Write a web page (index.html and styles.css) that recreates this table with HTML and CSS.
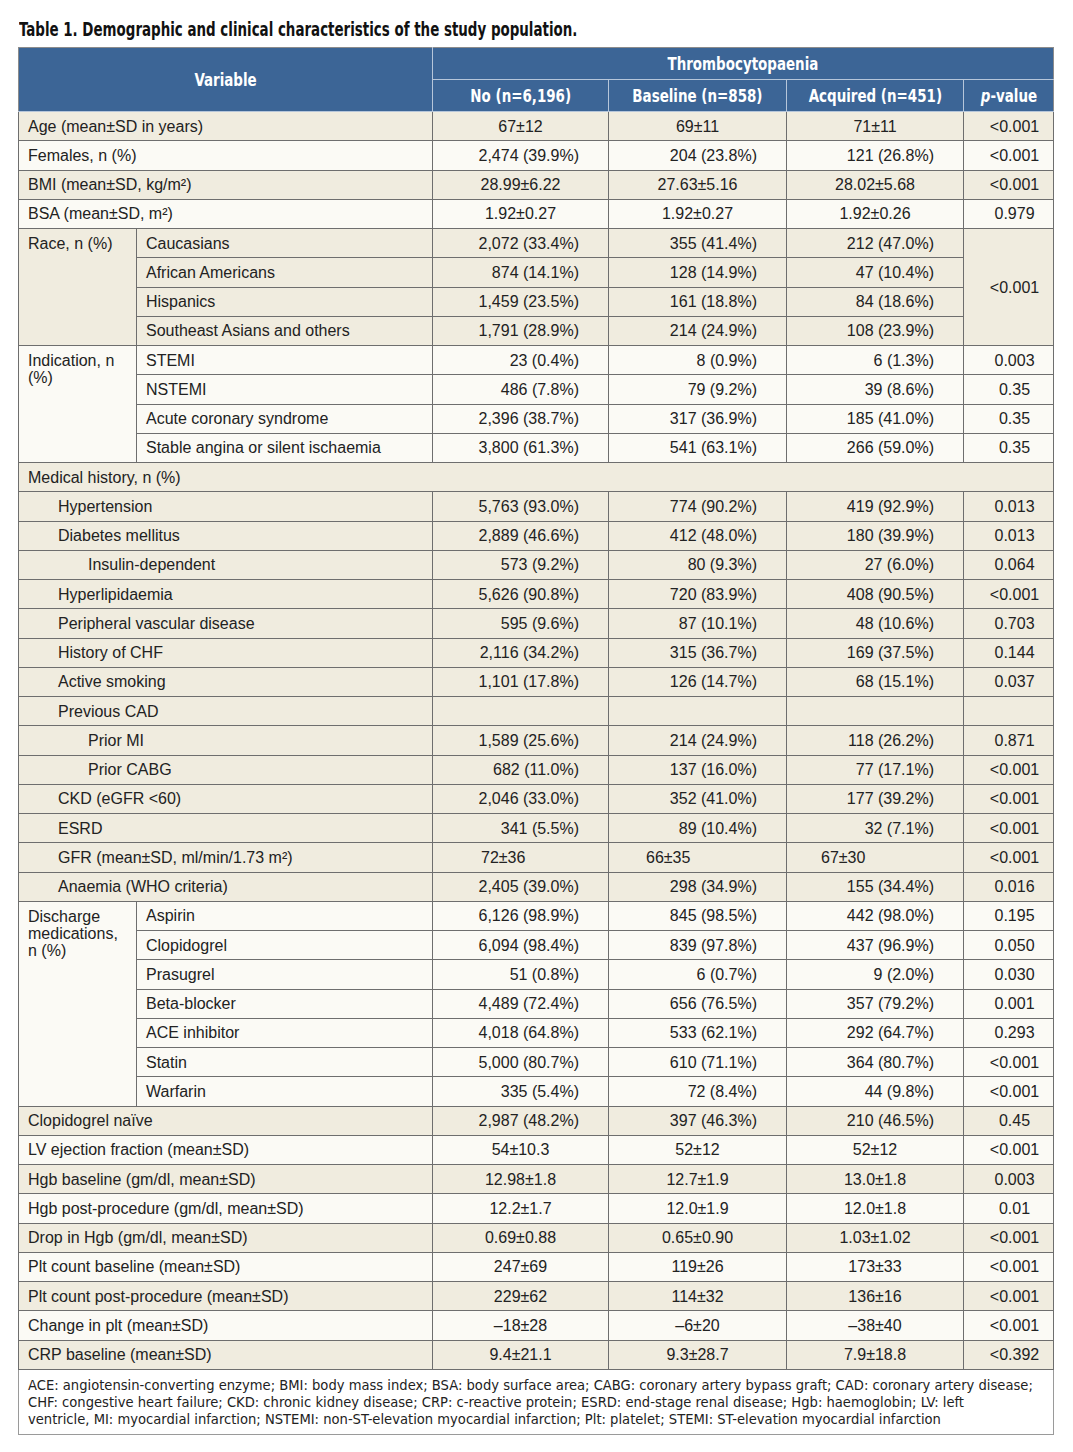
FILE: index.html
```html
<!DOCTYPE html>
<html lang="en">
<head>
<meta charset="utf-8">
<title>Table 1</title>
<link rel="stylesheet" href="styles.css">
</head>
<body>
<div class="page">
<h1 class="title"><span class="sq-title">Table 1. Demographic and clinical characteristics of the study population.</span></h1>
<table class="tbl">
<colgroup>
<col class="c-grp"><col class="c-sub"><col class="c-no"><col class="c-base"><col class="c-acq"><col class="c-p">
</colgroup>
<thead>
<tr class="h1">
<th colspan="2" rowspan="2"><span class="sq">Variable</span></th>
<th colspan="4"><span class="sq">Thrombocytopaenia</span></th>
</tr>
<tr class="h2">
<th><span class="sq">No (n=6,196)</span></th>
<th><span class="sq">Baseline (n=858)</span></th>
<th><span class="sq">Acquired (n=451)</span></th>
<th><span class="sq"><i>p</i>-value</span></th>
</tr>
</thead>
<tbody>
<tr class="bg"><td colspan="2" class="v">Age (mean±SD in years)</td><td class="c">67±12</td><td class="c">69±11</td><td class="c">71±11</td><td class="p">&lt;0.001</td></tr>
<tr class="wh"><td colspan="2" class="v">Females, n (%)</td><td class="n">2,474 (39.9%)</td><td class="n">204 (23.8%)</td><td class="n">121 (26.8%)</td><td class="p">&lt;0.001</td></tr>
<tr class="bg"><td colspan="2" class="v">BMI (mean±SD, kg/m²)</td><td class="c">28.99±6.22</td><td class="c">27.63±5.16</td><td class="c">28.02±5.68</td><td class="p">&lt;0.001</td></tr>
<tr class="wh"><td colspan="2" class="v">BSA (mean±SD, m²)</td><td class="c">1.92±0.27</td><td class="c">1.92±0.27</td><td class="c">1.92±0.26</td><td class="p">0.979</td></tr>

<tr class="bg"><td rowspan="4" class="v grp">Race, n (%)</td><td class="v">Caucasians</td><td class="n">2,072 (33.4%)</td><td class="n">355 (41.4%)</td><td class="n">212 (47.0%)</td><td rowspan="4" class="p">&lt;0.001</td></tr>
<tr class="bg"><td class="v">African Americans</td><td class="n">874 (14.1%)</td><td class="n">128 (14.9%)</td><td class="n">47 (10.4%)</td></tr>
<tr class="bg"><td class="v">Hispanics</td><td class="n">1,459 (23.5%)</td><td class="n">161 (18.8%)</td><td class="n">84 (18.6%)</td></tr>
<tr class="bg"><td class="v">Southeast Asians and others</td><td class="n">1,791 (28.9%)</td><td class="n">214 (24.9%)</td><td class="n">108 (23.9%)</td></tr>

<tr class="wh"><td rowspan="4" class="v grp">Indication, n (%)</td><td class="v">STEMI</td><td class="n">23 (0.4%)</td><td class="n">8 (0.9%)</td><td class="n">6 (1.3%)</td><td class="p">0.003</td></tr>
<tr class="wh"><td class="v">NSTEMI</td><td class="n">486 (7.8%)</td><td class="n">79 (9.2%)</td><td class="n">39 (8.6%)</td><td class="p">0.35</td></tr>
<tr class="wh"><td class="v">Acute coronary syndrome</td><td class="n">2,396 (38.7%)</td><td class="n">317 (36.9%)</td><td class="n">185 (41.0%)</td><td class="p">0.35</td></tr>
<tr class="wh"><td class="v">Stable angina or silent ischaemia</td><td class="n">3,800 (61.3%)</td><td class="n">541 (63.1%)</td><td class="n">266 (59.0%)</td><td class="p">0.35</td></tr>

<tr class="bg"><td colspan="6" class="v">Medical history, n (%)</td></tr>
<tr class="bg"><td colspan="2" class="v i1">Hypertension</td><td class="n">5,763 (93.0%)</td><td class="n">774 (90.2%)</td><td class="n">419 (92.9%)</td><td class="p">0.013</td></tr>
<tr class="bg"><td colspan="2" class="v i1">Diabetes mellitus</td><td class="n">2,889 (46.6%)</td><td class="n">412 (48.0%)</td><td class="n">180 (39.9%)</td><td class="p">0.013</td></tr>
<tr class="bg"><td colspan="2" class="v i2">Insulin-dependent</td><td class="n">573 (9.2%)</td><td class="n">80 (9.3%)</td><td class="n">27 (6.0%)</td><td class="p">0.064</td></tr>
<tr class="bg"><td colspan="2" class="v i1">Hyperlipidaemia</td><td class="n">5,626 (90.8%)</td><td class="n">720 (83.9%)</td><td class="n">408 (90.5%)</td><td class="p">&lt;0.001</td></tr>
<tr class="bg"><td colspan="2" class="v i1">Peripheral vascular disease</td><td class="n">595 (9.6%)</td><td class="n">87 (10.1%)</td><td class="n">48 (10.6%)</td><td class="p">0.703</td></tr>
<tr class="bg"><td colspan="2" class="v i1">History of CHF</td><td class="n">2,116 (34.2%)</td><td class="n">315 (36.7%)</td><td class="n">169 (37.5%)</td><td class="p">0.144</td></tr>
<tr class="bg"><td colspan="2" class="v i1">Active smoking</td><td class="n">1,101 (17.8%)</td><td class="n">126 (14.7%)</td><td class="n">68 (15.1%)</td><td class="p">0.037</td></tr>
<tr class="bg"><td colspan="2" class="v i1">Previous CAD</td><td></td><td></td><td></td><td></td></tr>
<tr class="bg"><td colspan="2" class="v i2">Prior MI</td><td class="n">1,589 (25.6%)</td><td class="n">214 (24.9%)</td><td class="n">118 (26.2%)</td><td class="p">0.871</td></tr>
<tr class="bg"><td colspan="2" class="v i2">Prior CABG</td><td class="n">682 (11.0%)</td><td class="n">137 (16.0%)</td><td class="n">77 (17.1%)</td><td class="p">&lt;0.001</td></tr>
<tr class="bg"><td colspan="2" class="v i1">CKD (eGFR &lt;60)</td><td class="n">2,046 (33.0%)</td><td class="n">352 (41.0%)</td><td class="n">177 (39.2%)</td><td class="p">&lt;0.001</td></tr>
<tr class="bg"><td colspan="2" class="v i1">ESRD</td><td class="n">341 (5.5%)</td><td class="n">89 (10.4%)</td><td class="n">32 (7.1%)</td><td class="p">&lt;0.001</td></tr>
<tr class="bg"><td colspan="2" class="v i1">GFR (mean±SD, ml/min/1.73 m²)</td><td class="l l-no">72±36</td><td class="l l-base">66±35</td><td class="l l-acq">67±30</td><td class="p">&lt;0.001</td></tr>
<tr class="bg"><td colspan="2" class="v i1">Anaemia (WHO criteria)</td><td class="n">2,405 (39.0%)</td><td class="n">298 (34.9%)</td><td class="n">155 (34.4%)</td><td class="p">0.016</td></tr>

<tr class="wh"><td rowspan="7" class="v grp">Discharge medications, n (%)</td><td class="v">Aspirin</td><td class="n">6,126 (98.9%)</td><td class="n">845 (98.5%)</td><td class="n">442 (98.0%)</td><td class="p">0.195</td></tr>
<tr class="wh"><td class="v">Clopidogrel</td><td class="n">6,094 (98.4%)</td><td class="n">839 (97.8%)</td><td class="n">437 (96.9%)</td><td class="p">0.050</td></tr>
<tr class="wh"><td class="v">Prasugrel</td><td class="n">51 (0.8%)</td><td class="n">6 (0.7%)</td><td class="n">9 (2.0%)</td><td class="p">0.030</td></tr>
<tr class="wh"><td class="v">Beta-blocker</td><td class="n">4,489 (72.4%)</td><td class="n">656 (76.5%)</td><td class="n">357 (79.2%)</td><td class="p">0.001</td></tr>
<tr class="wh"><td class="v">ACE inhibitor</td><td class="n">4,018 (64.8%)</td><td class="n">533 (62.1%)</td><td class="n">292 (64.7%)</td><td class="p">0.293</td></tr>
<tr class="wh"><td class="v">Statin</td><td class="n">5,000 (80.7%)</td><td class="n">610 (71.1%)</td><td class="n">364 (80.7%)</td><td class="p">&lt;0.001</td></tr>
<tr class="wh"><td class="v">Warfarin</td><td class="n">335 (5.4%)</td><td class="n">72 (8.4%)</td><td class="n">44 (9.8%)</td><td class="p">&lt;0.001</td></tr>

<tr class="bg"><td colspan="2" class="v">Clopidogrel naïve</td><td class="n">2,987 (48.2%)</td><td class="n">397 (46.3%)</td><td class="n">210 (46.5%)</td><td class="p">0.45</td></tr>
<tr class="wh"><td colspan="2" class="v">LV ejection fraction (mean±SD)</td><td class="c">54±10.3</td><td class="c">52±12</td><td class="c">52±12</td><td class="p">&lt;0.001</td></tr>
<tr class="bg"><td colspan="2" class="v">Hgb baseline (gm/dl, mean±SD)</td><td class="c">12.98±1.8</td><td class="c">12.7±1.9</td><td class="c">13.0±1.8</td><td class="p">0.003</td></tr>
<tr class="wh"><td colspan="2" class="v">Hgb post-procedure (gm/dl, mean±SD)</td><td class="c">12.2±1.7</td><td class="c">12.0±1.9</td><td class="c">12.0±1.8</td><td class="p">0.01</td></tr>
<tr class="bg"><td colspan="2" class="v">Drop in Hgb (gm/dl, mean±SD)</td><td class="c">0.69±0.88</td><td class="c">0.65±0.90</td><td class="c">1.03±1.02</td><td class="p">&lt;0.001</td></tr>
<tr class="wh"><td colspan="2" class="v">Plt count baseline (mean±SD)</td><td class="c">247±69</td><td class="c">119±26</td><td class="c">173±33</td><td class="p">&lt;0.001</td></tr>
<tr class="bg"><td colspan="2" class="v">Plt count post-procedure (mean±SD)</td><td class="c">229±62</td><td class="c">114±32</td><td class="c">136±16</td><td class="p">&lt;0.001</td></tr>
<tr class="wh"><td colspan="2" class="v">Change in plt (mean±SD)</td><td class="c">–18±28</td><td class="c">–6±20</td><td class="c">–38±40</td><td class="p">&lt;0.001</td></tr>
<tr class="bg"><td colspan="2" class="v">CRP baseline (mean±SD)</td><td class="c">9.4±21.1</td><td class="c">9.3±28.7</td><td class="c">7.9±18.8</td><td class="p">&lt;0.392</td></tr>
</tbody>
<tfoot>
<tr><td colspan="6" class="foot">ACE: angiotensin-converting enzyme; BMI: body mass index; BSA: body surface area; CABG: coronary artery bypass graft; CAD: coronary artery disease;<br>CHF: congestive heart failure; CKD: chronic kidney disease; CRP: c-reactive protein; ESRD: end-stage renal disease; Hgb: haemoglobin; LV: left<br>ventricle, MI: myocardial infarction; NSTEMI: non-ST-elevation myocardial infarction; Plt: platelet; STEMI: ST-elevation myocardial infarction</td></tr>
</tfoot>
</table>
</div>
</body>
</html>
```
FILE: styles.css
```css
html, body {
  margin: 0;
  padding: 0;
  background: #ffffff;
}

body {
  font-family: "Liberation Sans", Arial, sans-serif;
  color: #222222;
}

.page {
  padding: 18px 21px 0 18px;
}

.title {
  margin: 0 0 7px 1px;
  font-family: "DejaVu Sans Condensed", "Liberation Sans", sans-serif;
  font-stretch: condensed;
  font-weight: bold;
  font-size: 19px;
  line-height: 22px;
  color: #111111;
  white-space: nowrap;
}

.sq-title {
  display: inline-block;
  transform: scaleX(0.785);
  transform-origin: left center;
}

.tbl {
  width: 1035px;
  table-layout: fixed;
  border-collapse: collapse;
  border: 1px solid #8c8c8c;
}

.c-grp { width: 118px; }
.c-sub { width: 296px; }
.c-no { width: 176px; }
.c-base { width: 178px; }
.c-acq { width: 177px; }
.c-p { width: 90px; }

.tbl th {
  background: #3c6596;
  color: #ffffff;
  font-family: "DejaVu Sans Condensed", "Liberation Sans", sans-serif;
  font-stretch: condensed;
  font-weight: bold;
  font-size: 18px;
  height: 31px;
  padding: 0;
  border: 1px solid #b6c6da;
  text-align: center;
  vertical-align: middle;
  white-space: nowrap;
}

.sq {
  display: inline-block;
  transform: scaleX(0.83);
  transform-origin: center center;
}

.tbl thead tr:first-child th {
  border-top-color: #8c8c8c;
}

.tbl th:first-child {
  border-left-color: #8c8c8c;
}

.h1 th:last-child, .h2 th:last-child {
  border-right-color: #8c8c8c;
}

.tbl td {
  border: 1px solid #6e6e6e;
  font-size: 16px;
  line-height: 17px;
  height: 28.25px;
  padding: 0 9px;
  vertical-align: middle;
  white-space: nowrap;
}

.bg td { background: #f0ecdf; }
.wh td { background: #fbfaf5; }

.tbl td.grp {
  vertical-align: top;
  white-space: normal;
  padding-top: 6px;
}

.tbl td.v { text-align: left; }
.tbl td.i1 { padding-left: 39px; }
.tbl td.i2 { padding-left: 69px; }

.tbl td.c { text-align: center; }
.tbl td.n { text-align: right; padding-right: 29px; }
.tbl td.l { text-align: left; }
.tbl td.l-no { padding-left: 48px; }
.tbl td.l-base { padding-left: 37px; }
.tbl td.l-acq { padding-left: 34px; }
.tbl td.p { text-align: center; padding-left: 12px; padding-right: 0; }

.tbl td.foot {
  background: #ffffff;
  white-space: nowrap;
  font-family: "DejaVu Sans Condensed", "Liberation Sans", sans-serif;
  font-stretch: condensed;
  font-size: 14.6px;
  line-height: 17px;
  padding: 6px 9px 7px 9px;
  height: auto;
  border-color: #6e6e6e #9a9a9a #9a9a9a #9a9a9a;
}
```
